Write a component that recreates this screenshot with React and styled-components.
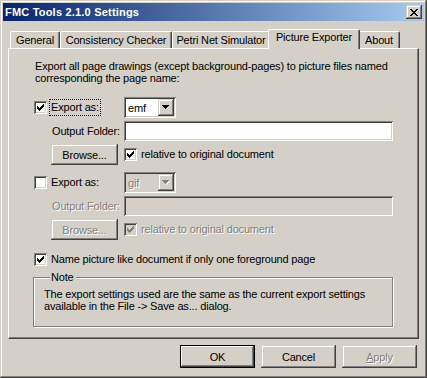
import React from 'react'
import styled, { createGlobalStyle, css } from 'styled-components'

const face = '#D4D0C8'
const shadow = '#808080'
const darkShadow = '#404040'

const GlobalStyle = createGlobalStyle`
  html, body {
    margin: 0;
    padding: 0;
    background: ${face};
  }
  body {
    font-family: "Liberation Sans", Arial, sans-serif;
    font-size: 11px;
    letter-spacing: -0.17px;
    color: #000;
  }
`

const raised = css`
  box-shadow: inset -1px -1px ${darkShadow}, inset 1px 1px ${face},
    inset -2px -2px ${shadow}, inset 2px 2px #fff;
`

const sunken = css`
  box-shadow: inset 1px 1px ${shadow}, inset -1px -1px #fff,
    inset 2px 2px ${darkShadow}, inset -2px -2px ${face};
`

const disabledText = css`
  color: ${shadow};
  text-shadow: 1px 1px #fff;
`

const Window = styled.div`
  width: 427px;
  height: 378px;
  box-sizing: border-box;
  padding: 3px;
  background: ${face};
  box-shadow: inset -1px -1px ${darkShadow}, inset 1px 1px ${face},
    inset -2px -2px ${shadow}, inset 2px 2px #fff;
  display: flex;
  flex-direction: column;
`

const TitleBar = styled.div`
  height: 18px;
  display: flex;
  align-items: center;
  justify-content: space-between;
  padding: 0 2px 0 2px;
  background: linear-gradient(to right, #0a246a, #a6caf0);
`

const TitleText = styled.span`
  color: #fff;
  font-weight: bold;
  font-size: 11px;
  letter-spacing: 0.2px;
`

const CloseButton = styled.div`
  width: 16px;
  height: 14px;
  box-sizing: border-box;
  background: ${face};
  display: flex;
  align-items: center;
  justify-content: center;
  ${raised}
`

const Body = styled.div`
  padding: 8px 5px 0 5px;
`

const TabRow = styled.div`
  height: 19px;
  display: flex;
  align-items: flex-end;
  padding-left: 2px;
`

const Tab = styled.div`
  width: ${p => p.$w}px;
  height: 17px;
  box-sizing: border-box;
  padding-top: 2px;
  line-height: 13px;
  text-align: center;
  white-space: nowrap;
  background: ${face};
  border-top: 1px solid #fff;
  border-left: 1px solid #fff;
  border-right: 1px solid ${darkShadow};
  border-radius: 2px 2px 0 0;
  box-shadow: inset -1px 0 ${shadow};

  ${p => p.$active && css`
    position: relative;
    z-index: 1;
    height: 20px;
    width: ${p.$w + 4}px;
    margin: 0 -2px -1px -2px;
    padding-top: 1px;
  `}
`

const Panel = styled.div`
  height: 291px;
  box-sizing: border-box;
  padding: 11px 25px 0 25px;
  background: ${face};
  border-top: 1px solid #fff;
  border-left: 1px solid #fff;
  border-right: 1px solid ${darkShadow};
  border-bottom: 1px solid ${darkShadow};
  box-shadow: inset -1px -1px ${shadow};
`

const Intro = styled.p`
  margin: 0 0 0 1px;
  line-height: 12px;
  white-space: nowrap;
`

const ExportGrid = styled.div`
  display: grid;
  grid-template-columns: 90px 269px;
  grid-template-rows: 21px 20px 21px;
  row-gap: 3px;
  margin-top: ${p => p.$top}px;
`

const CheckLabel = styled.div`
  display: flex;
  align-items: center;
  white-space: nowrap;
`

const Label = styled.span`
  display: flex;
  align-items: center;
  white-space: nowrap;
  line-height: 13px;
  margin-left: ${p => p.$indent || 0}px;
  padding: 1px 1px;
  ${p => p.$focus && css`
    outline: 1px dotted #000;
    outline-offset: 0;
  `}
  ${p => p.$disabled && disabledText}
`

const Box = styled.span`
  width: 13px;
  height: 13px;
  flex: none;
  box-sizing: border-box;
  display: flex;
  align-items: center;
  justify-content: center;
  margin-right: 3px;
  background: ${p => (p.$disabled ? face : '#fff')};
  ${sunken}
`

const Combo = styled.div`
  width: 52px;
  height: 21px;
  box-sizing: border-box;
  padding: 2px;
  display: flex;
  align-items: stretch;
  background: ${p => (p.$disabled ? face : '#fff')};
  ${sunken}
`

const ComboValue = styled.span`
  flex: 1;
  display: flex;
  align-items: center;
  padding-left: 2px;
  ${p => p.$disabled && disabledText}
`

const ComboButton = styled.span`
  width: 16px;
  box-sizing: border-box;
  display: flex;
  align-items: center;
  justify-content: center;
  background: ${face};
  ${raised}
`

const TextBox = styled.div`
  width: 269px;
  height: 20px;
  box-sizing: border-box;
  background: ${p => (p.$disabled ? face : '#fff')};
  ${sunken}
`

const PushButton = styled.div`
  width: ${p => p.$w}px;
  height: ${p => p.$h || 23}px;
  box-sizing: border-box;
  margin-left: ${p => p.$indent || 0}px;
  display: flex;
  align-items: center;
  justify-content: center;
  background: ${face};
  ${raised}
  ${p => p.$default && css`
    border: 1px solid #000;
    box-shadow: inset -1px -1px ${darkShadow}, inset 1px 1px #fff,
      inset -2px -2px ${shadow};
  `}
  ${p => p.$disabled && disabledText}
`

const NameRow = styled.div`
  margin-top: 13px;
  display: flex;
  align-items: center;
  height: 13px;
`

const NoteBox = styled.fieldset`
  width: 360px;
  box-sizing: border-box;
  margin: 5px 0 0 -1px;
  padding: 4px 10px 14px 10px;
  border: 1px solid ${shadow};
  box-shadow: inset 1px 1px #fff, 1px 1px #fff;
`

const NoteLegend = styled.legend`
  margin-left: 6px;
  padding: 0 2px 0 1px;
  line-height: 13px;
  background: ${face};
`

const NoteText = styled.p`
  margin: 0;
  line-height: 12px;
  white-space: nowrap;
`

const ButtonRow = styled.div`
  display: flex;
  justify-content: flex-end;
  gap: 6px;
  margin-top: 6px;
  padding-right: 2px;
`

function CheckMark({ color }) {
  const cols = [2, 3, 4, 3, 2, 1, 0]
  return (
    <svg width="7" height="7" viewBox="0 0 7 7" shapeRendering="crispEdges">
      {cols.map((y, x) => (
        <rect key={x} x={x} y={y} width="1" height="3" fill={color} />
      ))}
    </svg>
  )
}

function Check({ checked, disabled }) {
  return (
    <Box $disabled={disabled}>
      {checked && <CheckMark color={disabled ? shadow : '#000'} />}
    </Box>
  )
}

function DownArrow({ disabled }) {
  const rows = [[0, 7], [1, 5], [2, 3], [3, 1]]
  return (
    <svg width="8" height="5" viewBox="0 0 8 5" shapeRendering="crispEdges">
      {disabled && rows.map(([y, w]) => (
        <rect key={'s' + y} x={(7 - w) / 2 + 1} y={y + 1} width={w} height="1" fill="#fff" />
      ))}
      {rows.map(([y, w]) => (
        <rect key={y} x={(7 - w) / 2} y={y} width={w} height="1" fill={disabled ? shadow : '#000'} />
      ))}
    </svg>
  )
}

function CloseGlyph() {
  const rows = [
    [[0, 2], [6, 2]],
    [[1, 2], [5, 2]],
    [[2, 4]],
    [[3, 2]],
    [[2, 4]],
    [[1, 2], [5, 2]],
    [[0, 2], [6, 2]],
  ]
  return (
    <svg width="8" height="7" viewBox="0 0 8 7" shapeRendering="crispEdges">
      {rows.map((segs, y) =>
        segs.map(([x, w]) => <rect key={y + '-' + x} x={x} y={y} width={w} height="1" fill="#000" />)
      )}
    </svg>
  )
}

function ExportGroup({ top, format, enabled, focus }) {
  const off = !enabled
  return (
    <ExportGrid $top={top}>
      <CheckLabel>
        <Check checked={enabled} />
        <Label $focus={focus}>Export as:</Label>
      </CheckLabel>
      <Combo $disabled={off}>
        <ComboValue $disabled={off}>{format}</ComboValue>
        <ComboButton>
          <DownArrow disabled={off} />
        </ComboButton>
      </Combo>

      <Label $indent={17} $disabled={off}>Output Folder:</Label>
      <TextBox $disabled={off} />

      <PushButton $w={67} $h={21} $indent={17} $disabled={off}>Browse...</PushButton>
      <CheckLabel>
        <Check checked disabled={off} />
        <Label $disabled={off}>relative to original document</Label>
      </CheckLabel>
    </ExportGrid>
  )
}

const tabs = [
  { label: 'General', w: 50 },
  { label: 'Consistency Checker', w: 112 },
  { label: 'Petri Net Simulator', w: 98 },
  { label: 'Picture Exporter', w: 88, active: true },
  { label: 'About', w: 42 },
]

export default function App() {
  return (
    <>
      <GlobalStyle />
      <Window>
        <TitleBar>
          <TitleText>FMC Tools 2.1.0 Settings</TitleText>
          <CloseButton>
            <CloseGlyph />
          </CloseButton>
        </TitleBar>
        <Body>
          <TabRow>
            {tabs.map(t => (
              <Tab key={t.label} $w={t.w} $active={t.active}>{t.label}</Tab>
            ))}
          </TabRow>
          <Panel>
            <Intro>
              Export all page drawings (except background-pages) to picture files named
              <br />
              corresponding the page name:
            </Intro>
            <ExportGroup top={13} format="emf" enabled focus />
            <ExportGroup top={7} format="gif" enabled={false} />
            <NameRow>
              <Check checked />
              <Label>Name picture like document if only one foreground page</Label>
            </NameRow>
            <NoteBox>
              <NoteLegend>Note</NoteLegend>
              <NoteText>
                The export settings used are the same as the current export settings
                <br />
                available in the File -&gt; Save as... dialog.
              </NoteText>
            </NoteBox>
          </Panel>
          <ButtonRow>
            <PushButton $w={75} $default>OK</PushButton>
            <PushButton $w={75}>Cancel</PushButton>
            <PushButton $w={75} $disabled><u>A</u>pply</PushButton>
          </ButtonRow>
        </Body>
      </Window>
    </>
  )
}
